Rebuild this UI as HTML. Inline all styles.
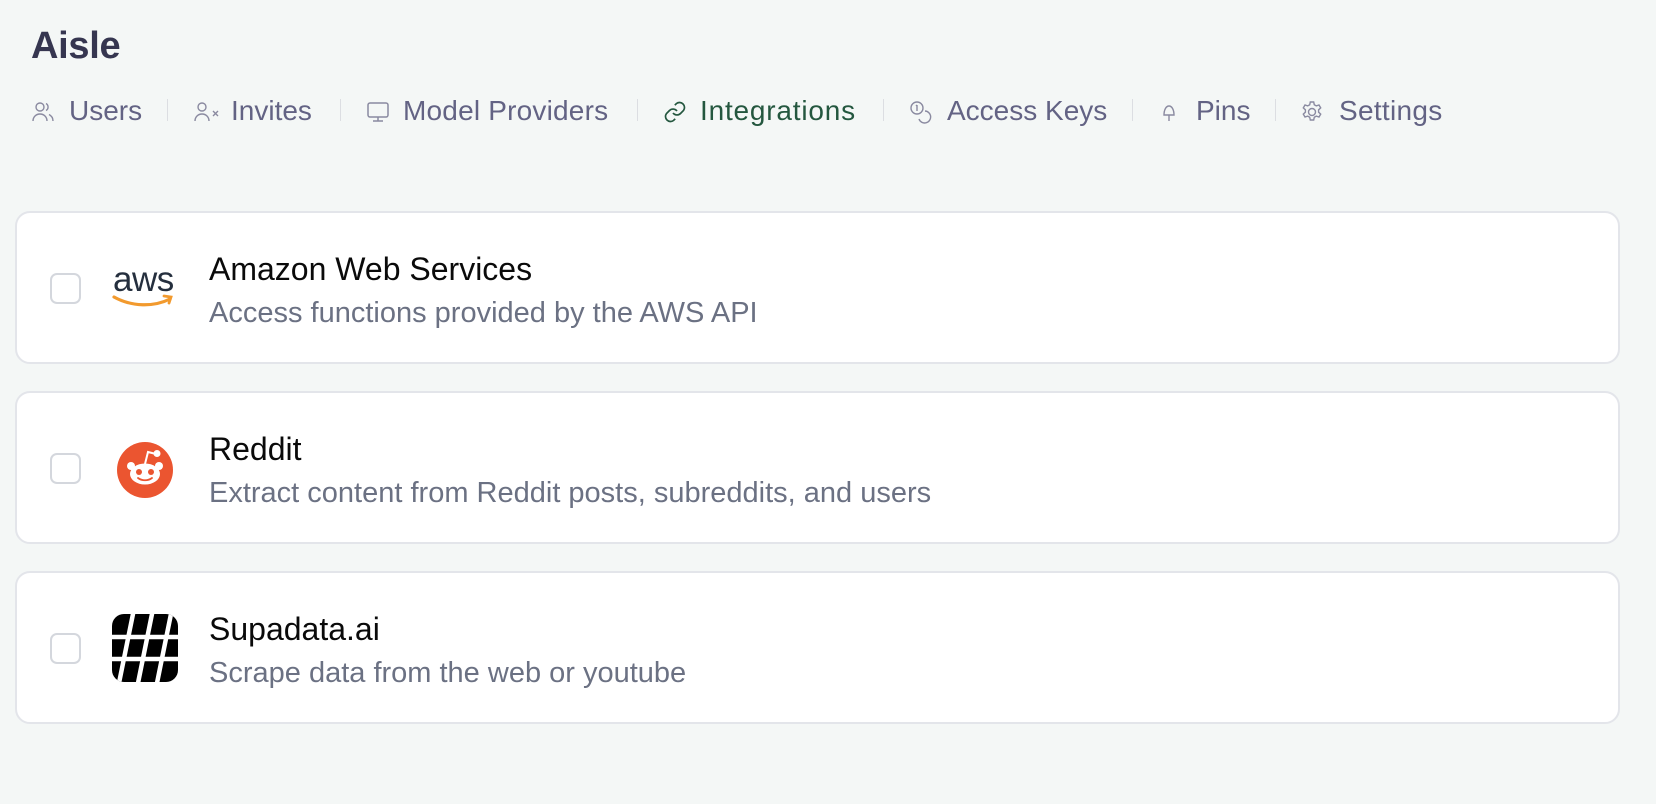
<!DOCTYPE html>
<html><head><meta charset="utf-8"><style>
*{margin:0;padding:0;box-sizing:border-box}
body{width:1656px;height:804px;background:#f4f7f6;font-family:"Liberation Sans",Arial,sans-serif;position:relative;overflow:hidden}
h1{position:absolute;left:31px;top:25px;font-size:38px;font-weight:bold;color:#363650;letter-spacing:-0.3px}
.nav{position:absolute;top:94px;left:0;height:34px}
.nav .i{position:absolute;top:0;font-size:28px;color:#636384;white-space:nowrap;line-height:34px}
.nav svg{position:absolute;top:6px}
.sep{position:absolute;top:99px;width:1px;height:22px;background:#dcdee2}
.card{position:absolute;left:15px;width:1605px;height:153px;background:#fff;border:2px solid #e3e5ea;border-radius:15px}
.cb{position:absolute;left:33px;top:60px;width:31px;height:31px;border:2px solid #d4d7dd;border-radius:7px;background:#fff}
.t{position:absolute;left:192px;top:38px;font-size:32px;color:#0a0a0a;white-space:nowrap}
.d{position:absolute;left:192px;top:84px;font-size:29px;color:#6b7183;white-space:nowrap}
</style></head><body>
<h1>Aisle</h1>
<div class="nav">
<svg style="left:32px" width="22" height="22" viewBox="0 0 22 22" fill="none" stroke="#8a8aa0" stroke-width="1.4"><circle cx="8" cy="7" r="4"/><path d="M1 21c0-4 3-7 7-7s7 3 7 7"/><path d="M14 3.5a4 4 0 0 1 0 7M17 14.5c2 1 4 3 4 6.5"/></svg>
<span class="i" style="left:69px">Users</span>
<svg style="left:194px" width="28" height="22" viewBox="0 0 28 22" fill="none" stroke="#8a8aa0" stroke-width="1.4"><circle cx="8" cy="7" r="4"/><path d="M1 21c0-4 3-7 7-7s7 3 7 7"/><path d="M19 11l5 5M24 11l-5 5"/></svg>
<span class="i" style="left:231px">Invites</span>
<svg style="left:366px" width="24" height="24" viewBox="0 0 24 24" fill="none" stroke="#8a8aa0" stroke-width="1.5"><rect x="2" y="3" width="20" height="14" rx="2"/><path d="M12 17v4M7 21h10"/></svg>
<span class="i" style="left:403px;letter-spacing:0.2px">Model Providers</span>
<svg style="left:663px" width="24" height="24" viewBox="0 0 24 24" fill="none" stroke="#24573f" stroke-width="1.7"><path d="M10 13a5 5 0 0 0 7.5.5l3-3a5 5 0 0 0-7-7l-1.7 1.7"/><path d="M14 11a5 5 0 0 0-7.5-.5l-3 3a5 5 0 0 0 7 7l1.7-1.7"/></svg>
<span class="i" style="left:700px;color:#24573f;letter-spacing:0.8px">Integrations</span>
<svg style="left:909px" width="24" height="24" viewBox="0 0 24 24" fill="none" stroke="#8a8aa0" stroke-width="1.4"><circle cx="8" cy="8" r="6"/><path d="M8 5v6M7 6l1-1"/><path d="M16 11a6 6 0 1 1-6 8"/></svg>
<span class="i" style="left:947px">Access Keys</span>
<svg style="left:1160px" width="18" height="24" viewBox="0 0 18 24" fill="none" stroke="#8a8aa0" stroke-width="1.4"><path d="M4 15c0-5 2-9 5-9s5 4 5 9z"/><path d="M9 15v6"/></svg>
<span class="i" style="left:1196px">Pins</span>
<svg style="left:1300px" width="24" height="24" viewBox="0 0 24 24" fill="none" stroke="#8a8aa0" stroke-width="1.4"><circle cx="12" cy="12" r="3.5"/><path d="M10.3 2h3.4l.6 2.8 2 1.1 2.7-.9 1.7 2.9-2.1 1.9v2.4l2.1 1.9-1.7 2.9-2.7-.9-2 1.1-.6 2.8h-3.4l-.6-2.8-2-1.1-2.7.9-1.7-2.9 2.1-1.9v-2.4L3.3 7.9 5 5l2.7.9 2-1.1z"/></svg>
<span class="i" style="left:1339px;letter-spacing:0.3px">Settings</span>
</div>
<div class="sep" style="left:167px"></div><div class="sep" style="left:340px"></div><div class="sep" style="left:637px"></div><div class="sep" style="left:883px"></div><div class="sep" style="left:1132px"></div><div class="sep" style="left:1275px"></div>

<div class="card" style="top:211px">
<div class="cb"></div>
<svg style="position:absolute;left:95px;top:48px" width="70" height="52" viewBox="0 0 70 52"><text x="1" y="30" font-family="Liberation Sans,Arial,sans-serif" font-size="35" fill="#252f3e" letter-spacing="-0.5">aws</text><path d="M2 36c18 10 40 10 56 2" stroke="#f29a2e" stroke-width="3.2" fill="none" stroke-linecap="round"/><path d="M52 35l7 1-2 6" stroke="#f29a2e" stroke-width="2.8" fill="none" stroke-linecap="round"/></svg>
<div class="t">Amazon Web Services</div>
<div class="d">Access functions provided by the AWS API</div>
</div>

<div class="card" style="top:391px">
<div class="cb"></div>
<svg style="position:absolute;left:99px;top:48px" width="58" height="58" viewBox="0 0 58 58"><circle cx="29" cy="29" r="28" fill="#eb5530"/><ellipse cx="29" cy="33" rx="15" ry="10.5" fill="#fff"/><circle cx="15" cy="25" r="4" fill="#fff"/><circle cx="43" cy="25" r="4" fill="#fff"/><path d="M29 23l3-12 8 2" stroke="#fff" stroke-width="2" fill="none"/><circle cx="41" cy="12.5" r="3.5" fill="#fff"/><circle cx="23" cy="31" r="3" fill="#eb5530"/><circle cx="35" cy="31" r="3" fill="#eb5530"/><path d="M22 37c4 3 10 3 14 0" stroke="#eb5530" stroke-width="1.8" fill="none" stroke-linecap="round"/></svg>
<div class="t">Reddit</div>
<div class="d">Extract content from Reddit posts, subreddits, and users</div>
</div>

<div class="card" style="top:571px">
<div class="cb"></div>
<svg style="position:absolute;left:95px;top:41px" width="66" height="68" viewBox="0 0 66 68"><defs><clipPath id="c"><rect width="66" height="68" rx="12"/></clipPath></defs><g clip-path="url(#c)"><rect width="66" height="68" fill="#000"/><path d="M22 -5L6 74M41 -5L25 74M60 -5L44 74" stroke="#fff" stroke-width="4.5"/><path d="M0 23H66M0 45H66" stroke="#fff" stroke-width="4.5"/></g></svg>
<div class="t">Supadata.ai</div>
<div class="d">Scrape data from the web or youtube</div>
</div>
</body></html>
